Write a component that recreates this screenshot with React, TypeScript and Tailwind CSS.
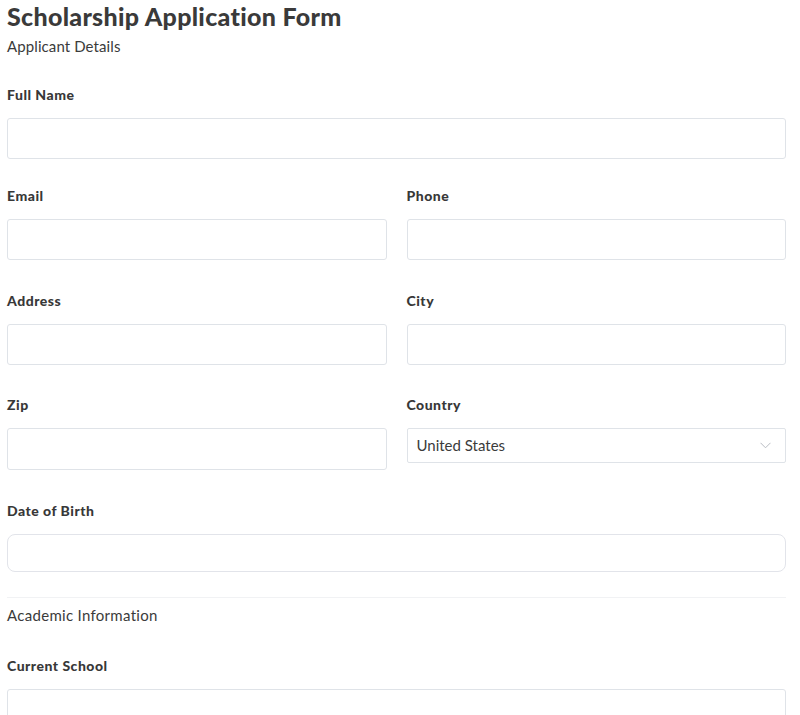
import React from "react";

const font = { fontFamily: "Lato, 'Open Sans', sans-serif" };

function Label({ children }: { children: React.ReactNode }) {
  return (
    <label className="block text-[14px] leading-[20px] font-black tracking-[0.5px] text-[#383838] mb-[13px]">
      {children}
    </label>
  );
}

function TextInput({ className = "" }: { className?: string }) {
  return (
    <input
      type="text"
      className={`block w-full h-[41px] rounded-[3px] border border-[#dfe3e8] bg-white px-[10px] text-[14px] outline-none ${className}`}
    />
  );
}

function Field({ label, className = "" }: { label: string; className?: string }) {
  return (
    <div className={className}>
      <Label>{label}</Label>
      <TextInput />
    </div>
  );
}

export default function App() {
  return (
    <div className="bg-white min-h-[715px] pl-[7px] pr-[14px] text-[#3b3b3b]" style={font}>
      <h1 className="text-[25px] leading-[32px] font-black tracking-[0.3px] text-[#3a3a3a]">
        Scholarship Application Form
      </h1>
      <p className="mt-[4px] text-[15px] leading-[20px] tracking-[0.1px] text-[#3b3b3b]">Applicant Details</p>

      <form className="mt-[29px]">
        <Field label="Full Name" />

        <div className="grid grid-cols-2 gap-x-[20px] mt-[27px]">
          <Field label="Email" />
          <Field label="Phone" />
        </div>

        <div className="grid grid-cols-2 gap-x-[20px] mt-[31px]">
          <Field label="Address" />
          <Field label="City" />
        </div>

        <div className="grid grid-cols-2 gap-x-[20px] mt-[30px] items-start">
          <div>
            <Label>Zip</Label>
            <TextInput className="h-[42px]" />
          </div>
          <div>
            <Label>Country</Label>
            <div className="relative">
              <select
                defaultValue="United States"
                className="block w-full h-[35px] appearance-none rounded-[2px] border border-[#dfe3e8] bg-white pl-[9px] pr-[30px] text-[15px] text-[#3b3b3b] outline-none"
                style={font}
              >
                <option>United States</option>
                <option>Canada</option>
                <option>Mexico</option>
              </select>
              <svg
                className="pointer-events-none absolute right-[15px] top-[14px]"
                width="11"
                height="7"
                viewBox="0 0 11 7"
                fill="none"
              >
                <path d="M0.5 0.8 L5.5 5.8 L10.5 0.8" stroke="#b8bcc2" strokeWidth="1" />
              </svg>
            </div>
          </div>
        </div>

        <div className="mt-[31px]">
          <Label>Date of Birth</Label>
          <input
            type="text"
            className="block w-full h-[38px] rounded-[8px] border border-[#e2e4ea] bg-white px-[10px] text-[14px] outline-none"
          />
        </div>

        <div className="mt-[25px] h-px bg-[#f1f2f4]" />

        <p className="mt-[7px] text-[15px] leading-[20px] tracking-[0.3px] text-[#3b3b3b]">Academic Information</p>

        <div className="mt-[31px]">
          <Label>Current School</Label>
          <TextInput />
        </div>
      </form>
    </div>
  );
}
